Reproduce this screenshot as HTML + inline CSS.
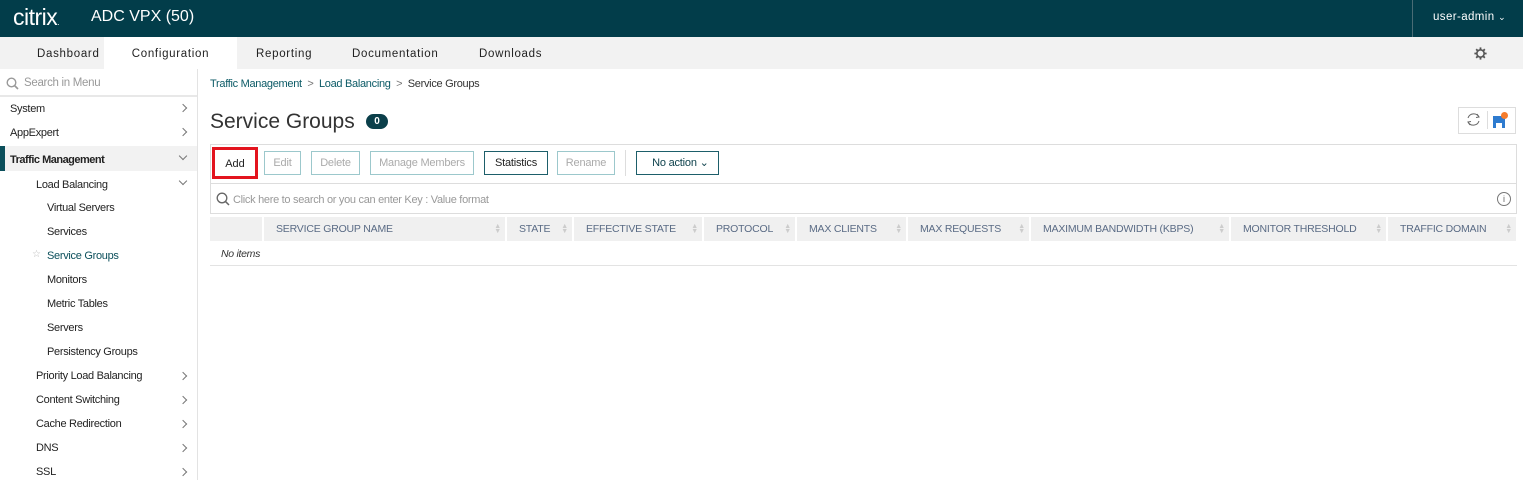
<!DOCTYPE html>
<html><head><meta charset="utf-8"><style>
*{box-sizing:border-box;margin:0;padding:0}
body{width:1523px;height:480px;overflow:hidden;background:#fff;font-family:"Liberation Sans",sans-serif;color:#222;position:relative}
.abs{position:absolute}
.hdr{left:0;top:0;width:1523px;height:37px;background:#023d4a;color:#fff}
.nav{left:0;top:37px;width:1523px;height:32px;background:#f2f2f2}
.tab{position:absolute;top:0;height:32px;line-height:34px;font-size:11.5px;letter-spacing:.7px;color:#222}
.side{left:0;top:69px;width:198px;height:411px;border-right:1px solid #e3e3e3}
.si{position:absolute;font-size:11px;letter-spacing:-.3px;color:#222;margin-top:1px}
.chev{position:absolute;width:6px;height:6px;border-right:1px solid #777;border-bottom:1px solid #777}
.r{transform:rotate(-45deg)}.d{transform:rotate(45deg)}
.btn{position:absolute;top:151px;height:24px;border:1px solid #9cc8cc;font-size:11px;letter-spacing:-.2px;color:#aaa;text-align:center;line-height:23px;background:#fff}
.th{position:absolute;top:217px;height:24px;background:#f0f0f0;font-size:10.5px;letter-spacing:-.2px;color:#5a6b85;line-height:25px;padding-left:12px}
.th i{position:absolute;right:4px;top:7px;font-style:normal;font-size:7px;line-height:5px;color:#ccc}
</style></head><body>
<div class="abs hdr">
 <div class="abs" style="left:13px;top:4px;font-size:23px;letter-spacing:-.5px;font-weight:300">citrix<span style="font-size:8px">.</span></div>
 <div class="abs" style="left:91px;top:8px;font-size:16px">ADC VPX (50)</div>
 <div class="abs" style="left:1412px;top:0;width:1px;height:37px;background:#4a6c75"></div>
 <div class="abs" style="left:1433px;top:11px;font-size:11.5px;letter-spacing:.4px">user-admin <span style="font-size:9px">&#8964;</span></div>
</div>
<div class="abs nav">
 <div class="tab" style="left:37px">Dashboard</div>
 <div class="tab" style="left:104px;width:133px;background:#fff;text-align:center">Configuration</div>
 <div class="tab" style="left:256px">Reporting</div>
 <div class="tab" style="left:352px">Documentation</div>
 <div class="tab" style="left:479px">Downloads</div>
 <svg class="abs" style="left:1474px;top:10px" width="13" height="13" viewBox="0 0 16 16"><circle cx="8" cy="8" r="4.5" fill="none" stroke="#555" stroke-width="2"/><g stroke="#555" stroke-width="2.2"><line x1="8" y1="0.5" x2="8" y2="3"/><line x1="8" y1="13" x2="8" y2="15.5"/><line x1="0.5" y1="8" x2="3" y2="8"/><line x1="13" y1="8" x2="15.5" y2="8"/><line x1="2.7" y1="2.7" x2="4.4" y2="4.4"/><line x1="11.6" y1="11.6" x2="13.3" y2="13.3"/><line x1="2.7" y1="13.3" x2="4.4" y2="11.6"/><line x1="11.6" y1="4.4" x2="13.3" y2="2.7"/></g></svg>
</div>
<div class="abs side">
 <div class="abs" style="left:0;top:0;width:197px;height:28px;border-bottom:2px solid #e8e8e8"></div>
 <svg class="abs" style="left:6px;top:8px" width="13" height="13" viewBox="0 0 13 13"><circle cx="5.5" cy="5.5" r="4.3" fill="none" stroke="#999" stroke-width="1.4"/><line x1="8.5" y1="8.5" x2="12" y2="12" stroke="#999" stroke-width="1.6"/></svg>
 <div class="si" style="left:24px;top:7px;color:#999;font-size:11.5px">Search in Menu</div>
 <div class="si" style="left:10px;top:33px">System</div><div class="chev r" style="left:180px;top:36px"></div>
 <div class="si" style="left:10px;top:57px">AppExpert</div><div class="chev r" style="left:180px;top:60px"></div>
 <div class="abs" style="left:0;top:77px;width:197px;height:25px;background:#f2f2f2"></div>
 <div class="abs" style="left:0;top:77px;width:5px;height:25px;background:#0b4f5b"></div>
 <div class="si" style="left:10px;top:84px;font-weight:bold;letter-spacing:-.5px">Traffic Management</div><div class="chev d" style="left:180px;top:84px"></div>
 <div class="si" style="left:36px;top:109px">Load Balancing</div><div class="chev d" style="left:180px;top:109px"></div>
 <div class="si" style="left:47px;top:132px">Virtual Servers</div>
 <div class="si" style="left:47px;top:156px">Services</div>
 <div class="si" style="left:32px;top:179px;color:#bbb;font-size:10px">&#9734;</div>
 <div class="si" style="left:47px;top:180px;color:#0b4f5b">Service Groups</div>
 <div class="si" style="left:47px;top:204px">Monitors</div>
 <div class="si" style="left:47px;top:228px">Metric Tables</div>
 <div class="si" style="left:47px;top:252px">Servers</div>
 <div class="si" style="left:47px;top:276px">Persistency Groups</div>
 <div class="si" style="left:36px;top:300px">Priority Load Balancing</div><div class="chev r" style="left:180px;top:304px"></div>
 <div class="si" style="left:36px;top:324px">Content Switching</div><div class="chev r" style="left:180px;top:328px"></div>
 <div class="si" style="left:36px;top:348px">Cache Redirection</div><div class="chev r" style="left:180px;top:352px"></div>
 <div class="si" style="left:36px;top:372px">DNS</div><div class="chev r" style="left:180px;top:376px"></div>
 <div class="si" style="left:36px;top:396px">SSL</div><div class="chev r" style="left:180px;top:400px"></div>
</div>
<div class="abs" style="left:210px;top:78px;font-size:11px;letter-spacing:-.3px"><span style="color:#0b5a66">Traffic Management</span> &nbsp;<span style="color:#777">&gt;</span>&nbsp; <span style="color:#0b5a66">Load Balancing</span> &nbsp;<span style="color:#777">&gt;</span>&nbsp; <span style="color:#333">Service Groups</span></div>
<div class="abs" style="left:210px;top:110px;font-size:21px;color:#333">Service Groups</div>
<div class="abs" style="left:366px;top:114px;width:22px;height:15px;border-radius:8px;background:#0b3f4a;color:#fff;font-size:10px;text-align:center;line-height:15px;font-weight:bold">0</div>
<div class="abs" style="left:1458px;top:107px;width:58px;height:27px;border:1px solid #ddd"></div>
<div class="abs" style="left:1487px;top:111px;width:1px;height:18px;background:#ddd"></div>
<svg class="abs" style="left:1465px;top:111px" width="17" height="17" viewBox="0 0 17 17"><path d="M3 7 A6 6 0 0 1 14 6" fill="none" stroke="#666" stroke-width="1"/><path d="M14 10 A6 6 0 0 1 3 11" fill="none" stroke="#666" stroke-width="1"/><path d="M12 3 L14 6 L11 6.5" fill="none" stroke="#666"/><path d="M5 14 L3 11 L6 10.5" fill="none" stroke="#666"/></svg>
<div class="abs" style="left:1493px;top:116px;width:12px;height:12px;background:#2e7bcf"></div>
<div class="abs" style="left:1496px;top:123px;width:6px;height:5px;background:#fff"></div>
<div class="abs" style="left:1501px;top:112px;width:7px;height:7px;border-radius:50%;background:#f57c2c"></div>
<div class="abs" style="left:210px;top:144px;width:1307px;height:40px;border:1px solid #ddd"></div>
<div class="abs" style="left:212px;top:147px;width:46px;height:32px;border:3px solid #e3141e;font-size:11px;text-align:center;line-height:28px;color:#222">Add</div>
<div class="btn" style="left:264px;width:37px">Edit</div>
<div class="btn" style="left:311px;width:49px">Delete</div>
<div class="btn" style="left:370px;width:104px">Manage Members</div>
<div class="btn" style="left:484px;width:64px;border-color:#1d5e6a;color:#222">Statistics</div>
<div class="btn" style="left:557px;width:58px">Rename</div>
<div class="abs" style="left:625px;top:150px;width:1px;height:26px;background:#ddd"></div>
<div class="btn" style="left:636px;width:83px;border-color:#1d5e6a;color:#0b3f4a">&nbsp;&nbsp;No action &#8964;</div>
<div class="abs" style="left:210px;top:184px;width:1307px;height:30px;border:1px solid #ddd;border-top:none"></div>
<svg class="abs" style="left:216px;top:192px" width="14" height="14" viewBox="0 0 14 14"><circle cx="6" cy="6" r="4.8" fill="none" stroke="#666" stroke-width="1.3"/><line x1="9.3" y1="9.3" x2="13" y2="13" stroke="#666" stroke-width="1.5"/></svg>
<div class="abs" style="left:233px;top:194px;font-size:11px;letter-spacing:-.3px;color:#999">Click here to search or you can enter Key : Value format</div>
<div class="abs" style="left:1497px;top:192px;width:14px;height:14px;border:1px solid #777;border-radius:50%;font-size:9px;text-align:center;line-height:12px;color:#666">i</div>
<div class="th" style="left:210px;width:52px"></div>
<div class="th" style="left:264px;width:241px">SERVICE GROUP NAME<i>▲<br>▼</i></div>
<div class="th" style="left:507px;width:65px">STATE<i>▲<br>▼</i></div>
<div class="th" style="left:574px;width:128px">EFFECTIVE STATE<i>▲<br>▼</i></div>
<div class="th" style="left:704px;width:91px">PROTOCOL<i>▲<br>▼</i></div>
<div class="th" style="left:797px;width:109px">MAX CLIENTS<i>▲<br>▼</i></div>
<div class="th" style="left:908px;width:121px">MAX REQUESTS<i>▲<br>▼</i></div>
<div class="th" style="left:1031px;width:198px">MAXIMUM BANDWIDTH (KBPS)<i>▲<br>▼</i></div>
<div class="th" style="left:1231px;width:155px">MONITOR THRESHOLD<i>▲<br>▼</i></div>
<div class="th" style="left:1388px;width:128px">TRAFFIC DOMAIN<i>▲<br>▼</i></div>
<div class="abs" style="left:210px;top:241px;width:1307px;height:25px;border-bottom:1px solid #e3e3e3"></div>
<div class="abs" style="left:221px;top:248px;font-size:10.5px;font-style:italic;color:#333;letter-spacing:-.3px">No items</div>
</body></html>
